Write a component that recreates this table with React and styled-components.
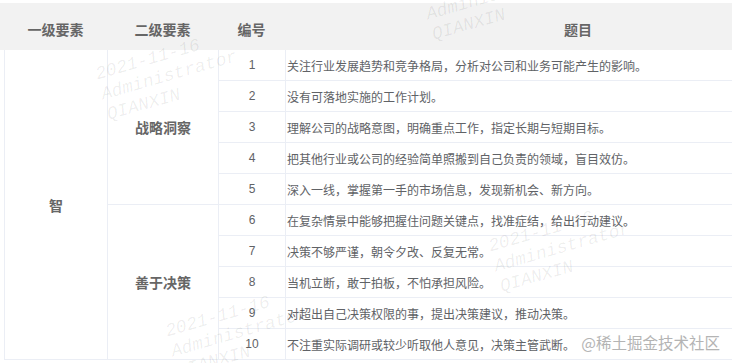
import React from "react";
import styled, { createGlobalStyle } from "styled-components";

const Global = createGlobalStyle`
  html, body { margin: 0; padding: 0; background: #fff; }
  body { font-family: "Liberation Sans", "Noto Sans CJK SC", sans-serif; }
`;

const Page = styled.div`
  position: relative;
  width: 732px;
  height: 363px;
  overflow: hidden;
  background: #fff;
  padding-top: 3px;
  box-sizing: border-box;
`;

const COLS = "103px 111px 67px 586px";

const Header = styled.div`
  display: grid;
  grid-template-columns: ${COLS};
  width: 880px;
  height: 47px;
  padding-left: 4px;
  box-sizing: border-box;
  background: #f2f2f2;
`;

const HeadCell = styled.div`
  display: flex;
  align-items: center;
  justify-content: center;
  padding-top: 5px;
  font-size: 14px;
  font-weight: bold;
  color: #666;
`;

const Body = styled.div`
  display: grid;
  grid-template-columns: ${COLS};
  grid-template-rows: repeat(10, 31px);
  margin-left: 4px;
  border-left: 1px solid #ebeef5;
  width: 868px;
`;

const Cell = styled.div`
  box-sizing: border-box;
  border-right: 1px solid #ebeef5;
  border-bottom: 1px solid #ebeef5;
  display: flex;
  align-items: center;
  justify-content: ${(p) => (p.$left ? "flex-start" : "center")};
  padding-left: ${(p) => (p.$left ? "1px" : "0")};
  font-size: ${(p) => (p.$group ? "14px" : "12px")};
  font-weight: ${(p) => (p.$group ? "bold" : "normal")};
  color: ${(p) => (p.$group ? "#666" : "#606266")};
  grid-row: ${(p) => p.$rows || "auto"};
  grid-column: ${(p) => p.$col};
  white-space: nowrap;
`;

const Mark = styled.div`
  position: absolute;
  left: ${(p) => p.$x}px;
  top: ${(p) => p.$y}px;
  transform: rotate(-16deg);
  transform-origin: left top;
  font-family: "Liberation Mono", monospace;
  font-style: italic;
  font-size: 18px;
  line-height: 21px;
  color: rgba(0, 0, 0, 0.07);
  pointer-events: none;
  white-space: pre;
`;

const Brand = styled.div`
  position: absolute;
  right: 12px;
  top: 332px;
  font-family: "Noto Sans CJK SC", sans-serif;
  font-size: 15.5px;
  line-height: 20px;
  color: #b4b4b4;
  pointer-events: none;
`;

const items = [
  "关注行业发展趋势和竞争格局，分析对公司和业务可能产生的影响。",
  "没有可落地实施的工作计划。",
  "理解公司的战略意图，明确重点工作，指定长期与短期目标。",
  "把其他行业或公司的经验简单照搬到自己负责的领域，盲目效仿。",
  "深入一线，掌握第一手的市场信息，发现新机会、新方向。",
  "在复杂情景中能够把握住问题关键点，找准症结，给出行动建议。",
  "决策不够严谨，朝令夕改、反复无常。",
  "当机立断，敢于拍板，不怕承担风险。",
  "对超出自己决策权限的事，提出决策建议，推动决策。",
  "不注重实际调研或较少听取他人意见，决策主管武断。",
];

const marks = [
  [93, 65],
  [418, -15],
  [486, 237],
  [163, 322],
];

export default function App() {
  return (
    <>
      <Global />
      <Page>
        <Header>
          <HeadCell>一级要素</HeadCell>
          <HeadCell>二级要素</HeadCell>
          <HeadCell>编号</HeadCell>
          <HeadCell>题目</HeadCell>
        </Header>
        <Body>
          <Cell $group $col="1" $rows="1 / 11">智</Cell>
          <Cell $group $col="2" $rows="1 / 6">战略洞察</Cell>
          <Cell $group $col="2" $rows="6 / 11">善于决策</Cell>
          {items.map((t, i) => (
            <React.Fragment key={i}>
              <Cell $col="3" $rows={`${i + 1}`}>{i + 1}</Cell>
              <Cell $left $col="4" $rows={`${i + 1}`}>{t}</Cell>
            </React.Fragment>
          ))}
        </Body>
        {marks.map(([x, y], i) => (
          <Mark key={i} $x={x} $y={y}>
            {"2021-11-16\nAdministrator\nQIANXIN"}
          </Mark>
        ))}
        <Brand>@稀土掘金技术社区</Brand>
      </Page>
    </>
  );
}
